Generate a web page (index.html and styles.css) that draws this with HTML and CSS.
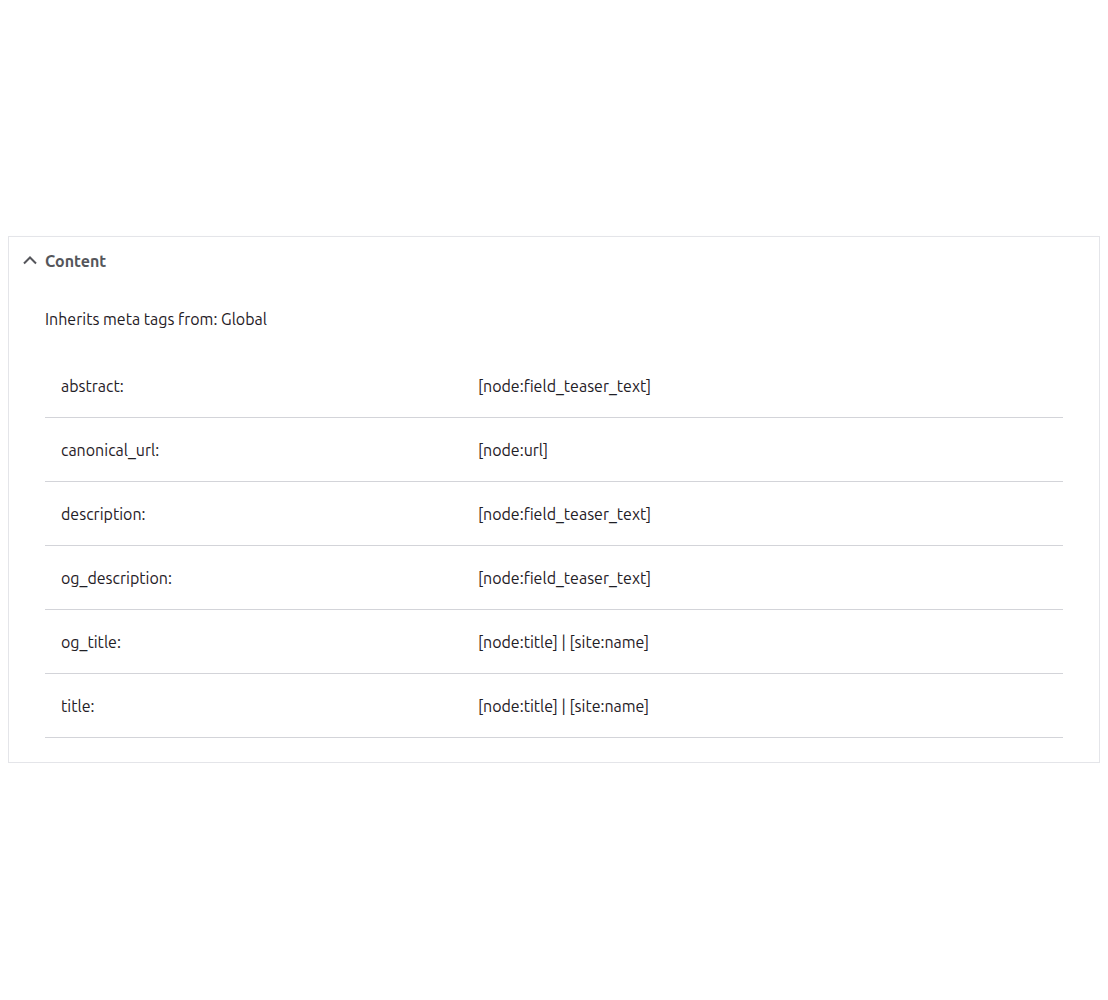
FILE: index.html
```html
<!DOCTYPE html>
<html lang="en">
<head>
    <meta charset="UTF-8">
    <meta name="viewport" content="width=device-width, initial-scale=1.0">
    <title>Metatags</title>
    <link rel="stylesheet" href="styles.css">
</head>
<body>
    <details class="panel" open>
        <summary class="panel-title">
            <svg class="chevron" width="16" height="10" viewBox="0 0 16 10"><polyline points="2,8.5 8,2.5 14,8.5" fill="none" stroke="#55565b" stroke-width="2"/></svg>
            <span>Content</span>
        </summary>
        <div class="panel-body">
            <p class="inherits">Inherits meta tags from: Global</p>
            <table class="tags">
                <tr><td class="tag-name">abstract:</td><td>[node:field_teaser_text]</td></tr>
                <tr><td class="tag-name">canonical_url:</td><td>[node:url]</td></tr>
                <tr><td class="tag-name">description:</td><td>[node:field_teaser_text]</td></tr>
                <tr><td class="tag-name">og_description:</td><td>[node:field_teaser_text]</td></tr>
                <tr><td class="tag-name">og_title:</td><td>[node:title] | [site:name]</td></tr>
                <tr><td class="tag-name">title:</td><td>[node:title] | [site:name]</td></tr>
            </table>
        </div>
    </details>
</body>
</html>
```
FILE: styles.css
```css
body{
    margin: 8px;
    padding-top: 228px;
    font-family: "Ubuntu", "Noto Sans", "Open Sans", sans-serif;
    font-size: 16px;
    color: #1f2026;
    background: white;
}
.panel{
    border: 1px solid #e4e5e9;
    box-shadow: 0 2px 3px rgba(0, 0, 0, 0.08);
    background: white;
}
.panel-title{
    list-style: none;
    display: flex;
    align-items: center;
    height: 48px;
    padding-left: 13px;
    font-weight: bold;
    color: #55565b;
    cursor: pointer;
}
.panel-title::-webkit-details-marker{
    display: none;
}
.chevron{
    margin-right: 7px;
    margin-top: -2px;
}
.panel-body{
    padding: 0 36px 24px 36px;
}
.inherits{
    margin: 0;
    padding-top: 24px;
    line-height: 20px;
    height: 45px;
}
.tags{
    width: 100%;
    border-collapse: collapse;
}
.tags td{
    height: 63px;
    padding: 0 16px;
    border-bottom: 1px solid #d3d4d9;
    vertical-align: middle;
}
.tags .tag-name{
    width: 385px;
}
```
